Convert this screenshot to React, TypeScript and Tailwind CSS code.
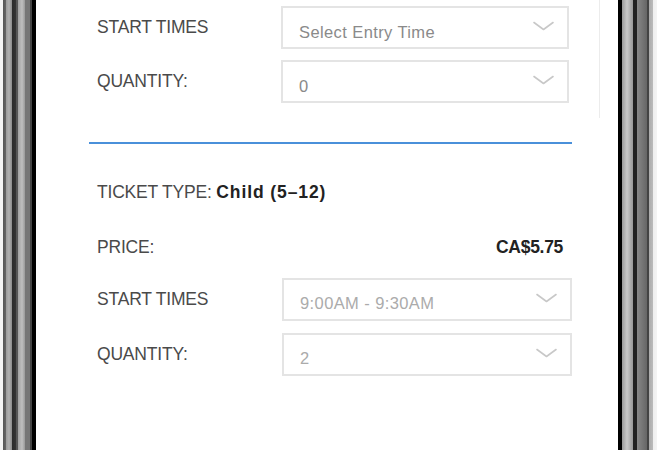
import React from "react";

const Chevron = () => (
  <svg width="21" height="10" viewBox="0 0 21 10" fill="none" className="shrink-0">
    <path d="M1 1.5 L10.5 8.5 L20 1.5" stroke="#c8c8c8" strokeWidth="1.6" strokeLinecap="round" strokeLinejoin="round" />
  </svg>
);

const SelectBox = ({ value, muted, wide }: { value: string; muted?: boolean; wide?: boolean }) => (
  <div
    className={`flex h-[43px] ${wide ? "w-[290px]" : "w-[288px]"} items-center justify-between border-2 border-[#e4e4e4] bg-white pl-[16px] pr-[13px]`}
  >
    <span className={`pt-[9px] text-[16.5px] tracking-[0.4px] ${muted ? "text-[#ababab]" : "text-[#8a8a8a]"}`}>{value}</span>
    <span className="pb-[3px]">
      <Chevron />
    </span>
  </div>
);

const Row = ({ label, value, muted, wide }: { label: string; value: string; muted?: boolean; wide?: boolean }) => (
  <div className="flex items-center justify-between">
    <span className="pl-[8px] text-[17.5px] tracking-[-0.2px] text-[#4a4a4a]">{label}</span>
    <SelectBox value={value} muted={muted} wide={wide} />
  </div>
);

export default function App() {
  return (
    <div
      className="flex h-[450px] w-[657px] overflow-hidden bg-white"
      style={{ fontFamily: '"Liberation Sans", Arial, sans-serif' }}
    >
      <div className="h-full w-[36px] shrink-0 bg-[linear-gradient(90deg,#f4f4f4_0px,#f4f4f4_3px,#555_3px,#666_6px,#9a9a9a_6px,#b0b0b0_9px,#8a8a8a_12px,#2a2a2a_12px,#333_16px,#555_16px,#555_18px,#a0a0a0_18px,#c0c0c0_22px,#999_25px,#777_25px,#777_30px,#444_30px,#444_32px,#000_32px,#000_36px)]" />
      <div className="flex h-full w-[582px] shrink-0 flex-col bg-white">
        <div className="ml-[53px] flex h-[118px] w-[511px] flex-col gap-[11px] border-r border-[#ececec] pt-[6px] pr-[30px]">
          <Row label="START TIMES" value="Select Entry Time" />
          <Row label="QUANTITY:" value="0" />
        </div>
        <div className="ml-[53px] mt-[24px] w-[483px] border-t-2 border-[#4a90da]" />
        <div className="ml-[53px] w-[483px]">
          <div className="pl-[8px] pt-[35px] text-[17.5px] tracking-[-0.2px] text-[#4a4a4a]">
            TICKET TYPE: <span className="font-bold tracking-[0.9px] text-[#222]">Child (5–12)</span>
          </div>
          <div className="mt-[29px] flex items-center justify-between pl-[8px] pr-[9px] text-[17.5px] tracking-[-0.2px]">
            <span className="text-[#4a4a4a]">PRICE:</span>
            <span className="font-bold tracking-[-0.3px] text-[#222]">CA$5.75</span>
          </div>
          <div className="mt-[17px] flex flex-col gap-[12px]">
            <Row label="START TIMES" value="9:00AM - 9:30AM" muted wide />
            <Row label="QUANTITY:" value="2" muted wide />
          </div>
        </div>
      </div>
      <div className="h-full flex-1 bg-[linear-gradient(90deg,#000_0px,#000_4px,#999_4px,#c8c8c8_9px,#999_15px,#222_15px,#222_19px,#888_19px,#666_29px,#444_29px,#444_31px,#aaa_31px,#bbb_35px,#eee_35px,#f4f4f4_39px)]" />
    </div>
  );
}
